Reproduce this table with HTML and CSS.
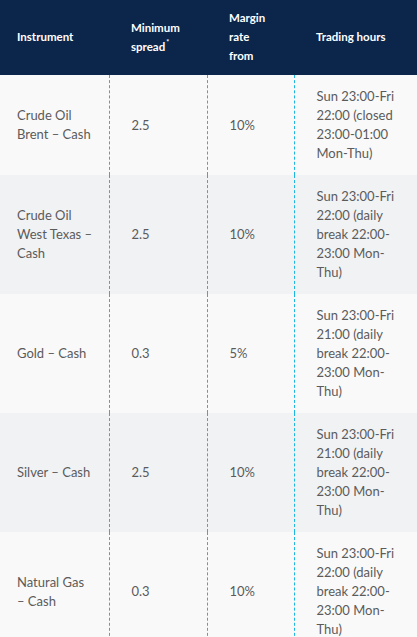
FILE: index.html
```html
<!DOCTYPE html>
<html>
<head>
<meta charset="utf-8">
<link rel="stylesheet" href="styles.css">
</head>
<body>
<table class="spec">
  <colgroup>
    <col class="c1"><col class="c2"><col class="c3"><col class="c4">
  </colgroup>
  <thead>
    <tr>
      <th>Instrument</th>
      <th>Minimum spread<sup>*</sup></th>
      <th>Margin rate from</th>
      <th>Trading hours</th>
    </tr>
  </thead>
  <tbody>
    <tr>
      <td>Crude Oil Brent – Cash</td>
      <td>2.5</td>
      <td>10%</td>
      <td>Sun 23:00-Fri 22:00 (closed 23:00-01:00 Mon-Thu)</td>
    </tr>
    <tr>
      <td>Crude Oil West Texas – Cash</td>
      <td>2.5</td>
      <td>10%</td>
      <td>Sun 23:00-Fri 22:00 (daily break 22:00-23:00 Mon-Thu)</td>
    </tr>
    <tr>
      <td>Gold – Cash</td>
      <td>0.3</td>
      <td>5%</td>
      <td>Sun 23:00-Fri 21:00 (daily break 22:00-23:00 Mon-Thu)</td>
    </tr>
    <tr>
      <td>Silver – Cash</td>
      <td>2.5</td>
      <td>10%</td>
      <td>Sun 23:00-Fri 21:00 (daily break 22:00-23:00 Mon-Thu)</td>
    </tr>
    <tr>
      <td>Natural Gas <span class="nowrap">– Cash</span></td>
      <td>0.3</td>
      <td>10%</td>
      <td>Sun 23:00-Fri 22:00 (daily break 22:00-23:00 Mon-Thu)</td>
    </tr>
  </tbody>
</table>
</body>
</html>
```
FILE: styles.css
```css
html, body {
  margin: 0;
  padding: 0;
  background: #f9f9f9;
}
body {
  font-family: Lato, "Open Sans", sans-serif;
}
.spec {
  width: 417px;
  border-collapse: collapse;
  table-layout: fixed;
}
.c1 { width: 109px; }
.c2 { width: 98px; }
.c3 { width: 87px; }
.c4 { width: 123px; }

.spec th {
  background: #0b254b;
  color: #ffffff;
  font-weight: 700;
  font-size: 11.5px;
  line-height: 19px;
  text-align: left;
  vertical-align: middle;
  height: 56px;
  padding: 8px 18px 10px 22px;
}
.spec th:first-child { padding-left: 17px; }
.spec th sup {
  font-size: 7px;
  line-height: 0;
  vertical-align: 6px;
  margin-left: 1px;
}
.spec td {
  color: #5b5b5b;
  font-size: 13px;
  line-height: 19px;
  vertical-align: middle;
  padding: 12px 18px 12px 22px;
  border-left: 1px dashed #1cb6e0;
}
.spec td:first-child {
  border-left: none;
  padding-left: 17px;
  padding-right: 12px;
}
.nowrap { white-space: nowrap; }
.spec tbody tr:nth-child(odd) td { background: #f9f9f9; }
.spec tbody tr:nth-child(even) td { background: #f1f2f4; }
```
